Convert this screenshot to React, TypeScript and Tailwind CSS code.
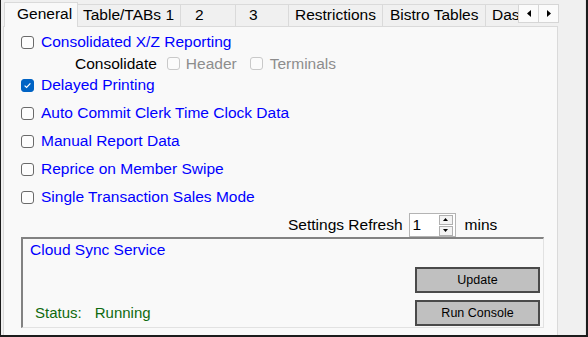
import React from "react";

function Box({ state }: { state: "off" | "on" | "dis" }) {
  if (state === "on") {
    return (
      <span className="w-[13px] h-[13px] shrink-0 rounded-[3px] bg-[#0063c4] border border-[#0063c4] flex items-center justify-center">
        <svg width="9" height="9" viewBox="0 0 9 9">
          <path d="M1.6 4.6 L3.6 6.5 L7.4 2.4" fill="none" stroke="#ffffff" strokeWidth="1.2" />
        </svg>
      </span>
    );
  }
  if (state === "dis") {
    return <span className="block w-[13px] h-[13px] shrink-0 rounded-[3px] bg-[#fbfbfb] border border-[#c9c9c9]" />;
  }
  return <span className="block w-[13px] h-[13px] shrink-0 rounded-[3px] bg-[#fdfdfd] border border-[#6a6a6a]" />;
}

function Row({ label, on }: { label: string; on?: boolean }) {
  return (
    <div className="h-[28px] flex items-center">
      <Box state={on ? "on" : "off"} />
      <span className="ml-[7px] text-[15.5px] text-[#0000ff] whitespace-nowrap">{label}</span>
    </div>
  );
}

export default function App() {
  return (
    <div className="w-[588px] h-[337px] bg-[#f0f0f0] overflow-hidden text-black font-['Liberation_Sans',Arial,sans-serif]">
      <div className="h-full flex border-l border-r-2 border-b-2 border-[#1c1c1c]">
        <div className="w-[557px] pl-[2px] flex flex-col">
          {/* tab header */}
          <div className="relative h-[26px] flex items-end pl-[1px] text-[15.5px]">
            <div className="relative z-10 w-[74px] h-[25px] -mb-px bg-[#f9f9f9] border-t border-l border-r border-[#dadada] pl-[12px] flex items-center pb-[3px]">
              General
            </div>
            <div className="w-[102px] h-[22px] bg-[#f0f0f0] border-t border-[#dadada] pl-[5px] flex items-center pb-px whitespace-nowrap">
              Table/TABs 1
            </div>
            <div className="w-[55px] h-[22px] bg-[#f0f0f0] border-t border-l border-[#dadada] pl-[14px] flex items-center pb-px">
              2
            </div>
            <div className="w-[53px] h-[22px] bg-[#f0f0f0] border-t border-l border-[#dadada] pl-[13px] flex items-center pb-px">
              3
            </div>
            <div className="w-[94px] h-[22px] bg-[#f0f0f0] border-t border-l border-[#dadada] pl-[6px] flex items-center pb-px whitespace-nowrap">
              Restrictions
            </div>
            <div className="w-[103px] h-[22px] bg-[#f0f0f0] border-t border-l border-[#dadada] pl-[7px] flex items-center pb-px whitespace-nowrap">
              Bistro Tables
            </div>
            <div className="w-[70px] h-[22px] bg-[#f0f0f0] border-t border-l border-[#dadada] pl-[6px] flex items-center pb-px whitespace-nowrap overflow-hidden">
              Dashboard
            </div>
            <div className="absolute left-[515px] top-[4px] flex z-20">
              <div className="w-[21px] h-[19px] bg-[#fbfbfb] border border-[#d6d6d6] flex items-center justify-center">
                <svg width="4" height="7" viewBox="0 0 4 7">
                  <path d="M4 0 L0 3.5 L4 7 Z" fill="#000" />
                </svg>
              </div>
              <div className="w-[21px] h-[19px] -ml-px bg-[#fbfbfb] border border-[#d6d6d6] flex items-center justify-center">
                <svg width="4" height="7" viewBox="0 0 4 7">
                  <path d="M0 0 L4 3.5 L0 7 Z" fill="#000" />
                </svg>
              </div>
            </div>
          </div>

          {/* panel */}
          <div className="flex-1 w-[555px] bg-[#f9f9f9] border border-b-0 border-[#dadada] pt-px pl-[17px]">
            <Row label="Consolidated X/Z Reporting" />
            <div className="h-[15px] flex items-center pl-[54px] text-[15.5px] whitespace-nowrap">
              <span>Consolidate</span>
              <span className="ml-[10px]"><Box state="dis" /></span>
              <span className="ml-[6px] text-[#8d8d8d]">Header</span>
              <span className="ml-[13px]"><Box state="dis" /></span>
              <span className="ml-[7px] text-[#8d8d8d]">Terminals</span>
            </div>
            <Row label="Delayed Printing" on />
            <Row label="Auto Commit Clerk Time Clock Data" />
            <Row label="Manual Report Data" />
            <Row label="Reprice on Member Swipe" />
            <Row label="Single Transaction Sales Mode" />

            <div className="mt-[2px] h-[24px] flex items-center pl-[267px] text-[15.5px] whitespace-nowrap">
              <span>Settings Refresh</span>
              <div className="ml-[6px] w-[47px] h-[24px] bg-white border border-[#b4b4b4] flex items-center">
                <span className="flex-1 pl-[3px]">1</span>
                <div className="flex flex-col gap-px mr-[2px]">
                  <div className="w-[14px] h-[10px] bg-[#f3f3f3] border border-[#b0b0b0] flex items-center justify-center">
                    <svg width="5" height="3" viewBox="0 0 5 3"><path d="M0 3 L2.5 0 L5 3 Z" fill="#000" /></svg>
                  </div>
                  <div className="w-[14px] h-[10px] bg-[#f3f3f3] border border-[#b0b0b0] flex items-center justify-center">
                    <svg width="5" height="3" viewBox="0 0 5 3"><path d="M0 0 L2.5 3 L5 0 Z" fill="#000" /></svg>
                  </div>
                </div>
              </div>
              <span className="ml-[9px]">mins</span>
            </div>

            {/* group box */}
            <div className="w-[523px] h-[91px] border-t-2 border-l-2 border-r border-b border-t-[#828282] border-l-[#828282] border-r-[#e2e2e2] border-b-[#e2e2e2] flex flex-col">
              <div className="h-[22px] flex items-center pl-[7px] text-[15.5px] text-[#0000ff]">Cloud Sync Service</div>
              <div className="pr-[3px]">
                <div className="mt-[6px] flex justify-end">
                  <div className="w-[125px] h-[26px] bg-[#c0c0c0] border-2 border-[#4a4a4a] flex items-center justify-center text-[12.5px]">
                    Update
                  </div>
                </div>
                <div className="mt-[7px] flex items-center justify-between">
                  <div className="pl-[12px] text-[15px] text-[#0f6a0f] whitespace-nowrap">
                    <span>Status:</span>
                    <span className="ml-[13px]">Running</span>
                  </div>
                  <div className="w-[125px] h-[26px] bg-[#c0c0c0] border-2 border-[#4a4a4a] flex items-center justify-center text-[12.5px]">
                    Run Console
                  </div>
                </div>
              </div>
            </div>
          </div>
        </div>
        <div className="flex-1 border-r border-[#e4e4e4]" />
      </div>
    </div>
  );
}
